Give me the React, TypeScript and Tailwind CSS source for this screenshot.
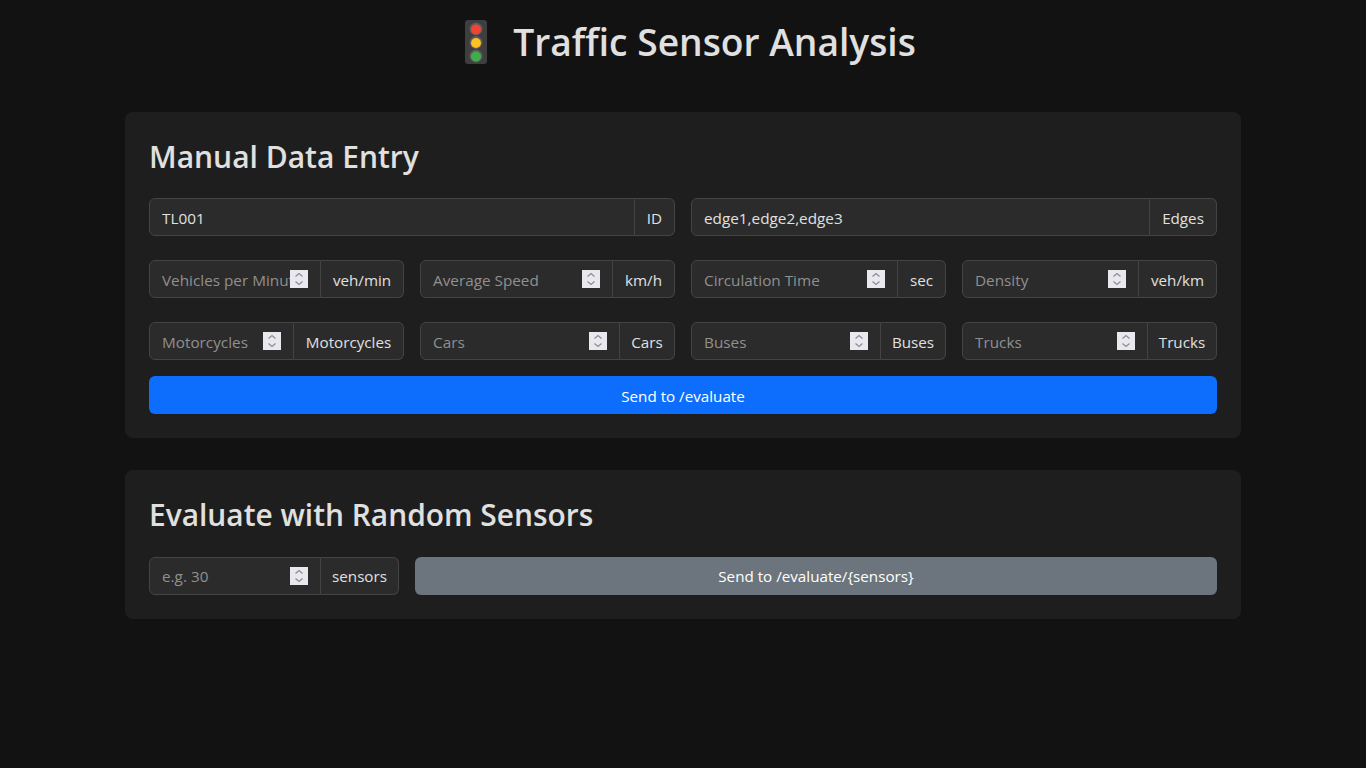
function Spinner() {
  return (
    <span className="shrink-0 w-[18px] h-[18px] bg-[#e9e8ee] flex items-center justify-center">
      <svg width="18" height="18" viewBox="0 0 18 18" fill="none" stroke="#8b8b96" strokeWidth="1.2">
        <path d="M5.5 6.5 9 3.5l3.5 3" />
        <path d="M5.5 11.5 9 14.5l3.5-3" />
      </svg>
    </span>
  );
}

function Field({ type = "number", placeholder, value, addon, addonWidth, textPad = "pt-0.5" }: { type?: string; placeholder?: string; value?: string; addon: string; addonWidth: string; textPad?: string }) {
  return (
    <div className="flex flex-1 min-w-0 items-stretch h-[38px]">
      <div className="flex flex-1 min-w-0 items-center px-3 bg-[#2b2b2b] border border-[#444] rounded-l-md">
        <input
          type="text"
          placeholder={placeholder}
          defaultValue={value}
          className={`min-w-0 w-[1%] flex-auto bg-transparent text-[15.3px] leading-6 text-[#e0e0e0] outline-none placeholder:text-[#909090] ${textPad}`}
        />
        {type === "number" && <Spinner />}
      </div>
      <span className={`flex items-center justify-center shrink-0 bg-[#2b2b2b] border border-l-0 border-[#444] rounded-r-md text-[15.2px] leading-6 text-[#e0e0e0] whitespace-nowrap ${textPad} ${addonWidth}`}>
        {addon}
      </span>
    </div>
  );
}

function TrafficLight() {
  return (
    <svg width="22" height="44" viewBox="0 0 22 44" className="shrink-0">
      <rect width="22" height="44" rx="3" fill="#3e3e3e" />
      <circle cx="11" cy="9" r="6.5" fill="#5c5c5c" />
      <circle cx="11" cy="22.5" r="6.5" fill="#5c5c5c" />
      <circle cx="11" cy="36" r="6.5" fill="#5c5c5c" />
      <circle cx="11" cy="9.5" r="5" fill="#f44336" />
      <circle cx="11" cy="23" r="5" fill="#fdc124" />
      <circle cx="11" cy="36.5" r="5" fill="#3fae49" />
    </svg>
  );
}

export default function App() {
  return (
    <div className="min-h-screen bg-[#121212] text-[#e0e0e0] font-['Open_Sans','Noto_Sans',sans-serif]">
      <div className="mx-auto w-[1140px] px-3">
        {/* header */}
        <h1 className="flex items-center justify-center gap-[26px] pl-[15px] pt-[18px] mb-[46px] text-[37.2px] leading-[48px] font-semibold">
          <TrafficLight />
          Traffic Sensor Analysis
        </h1>

        {/* manual entry */}
        <section className="bg-[#1e1e1e] rounded-lg p-6 mb-8">
          <h2 className="pt-[3px] text-[30px] leading-[35.4px] font-semibold mb-6">Manual Data Entry</h2>
          <div className="flex gap-4 mb-6">
            <Field type="text" value="TL001" addon="ID" addonWidth="w-[40px]" />
            <Field type="text" value="edge1,edge2,edge3" addon="Edges" addonWidth="w-[67px]" />
          </div>
          <div className="grid grid-cols-4 gap-4 mb-6">
            <Field placeholder="Vehicles per Minute" addon="veh/min" addonWidth="w-[83px]" />
            <Field placeholder="Average Speed" addon="km/h" addonWidth="w-[62px]" />
            <Field placeholder="Circulation Time" addon="sec" addonWidth="w-[48px]" />
            <Field placeholder="Density" addon="veh/km" addonWidth="w-[78px]" />
          </div>
          <div className="grid grid-cols-4 gap-4 mb-4">
            <Field placeholder="Motorcycles" addon="Motorcycles" addonWidth="w-[110px]" />
            <Field placeholder="Cars" addon="Cars" addonWidth="w-[55px]" />
            <Field placeholder="Buses" addon="Buses" addonWidth="w-[65px]" />
            <Field placeholder="Trucks" addon="Trucks" addonWidth="w-[69px]" />
          </div>
          <button className="w-full h-[38px] bg-[#0d6efd] text-white rounded-md pt-0.5 text-[15.2px] leading-6">Send to /evaluate</button>
        </section>

        {/* random sensors */}
        <section className="bg-[#1e1e1e] rounded-lg p-6">
          <h2 className="pt-[3px] text-[29.9px] leading-[35.4px] font-semibold mb-6">Evaluate with Random Sensors</h2>
          <div className="flex gap-4">
            <div className="w-[250px] flex">
              <Field placeholder="e.g. 30" addon="sensors" addonWidth="w-[78px]" textPad="pt-0" />
            </div>
            <button className="flex-1 h-[38px] bg-[#6c757d] text-white rounded-md text-[15.2px] leading-6">Send to /evaluate/{"{sensors}"}</button>
          </div>
        </section>
      </div>
    </div>
  );
}
